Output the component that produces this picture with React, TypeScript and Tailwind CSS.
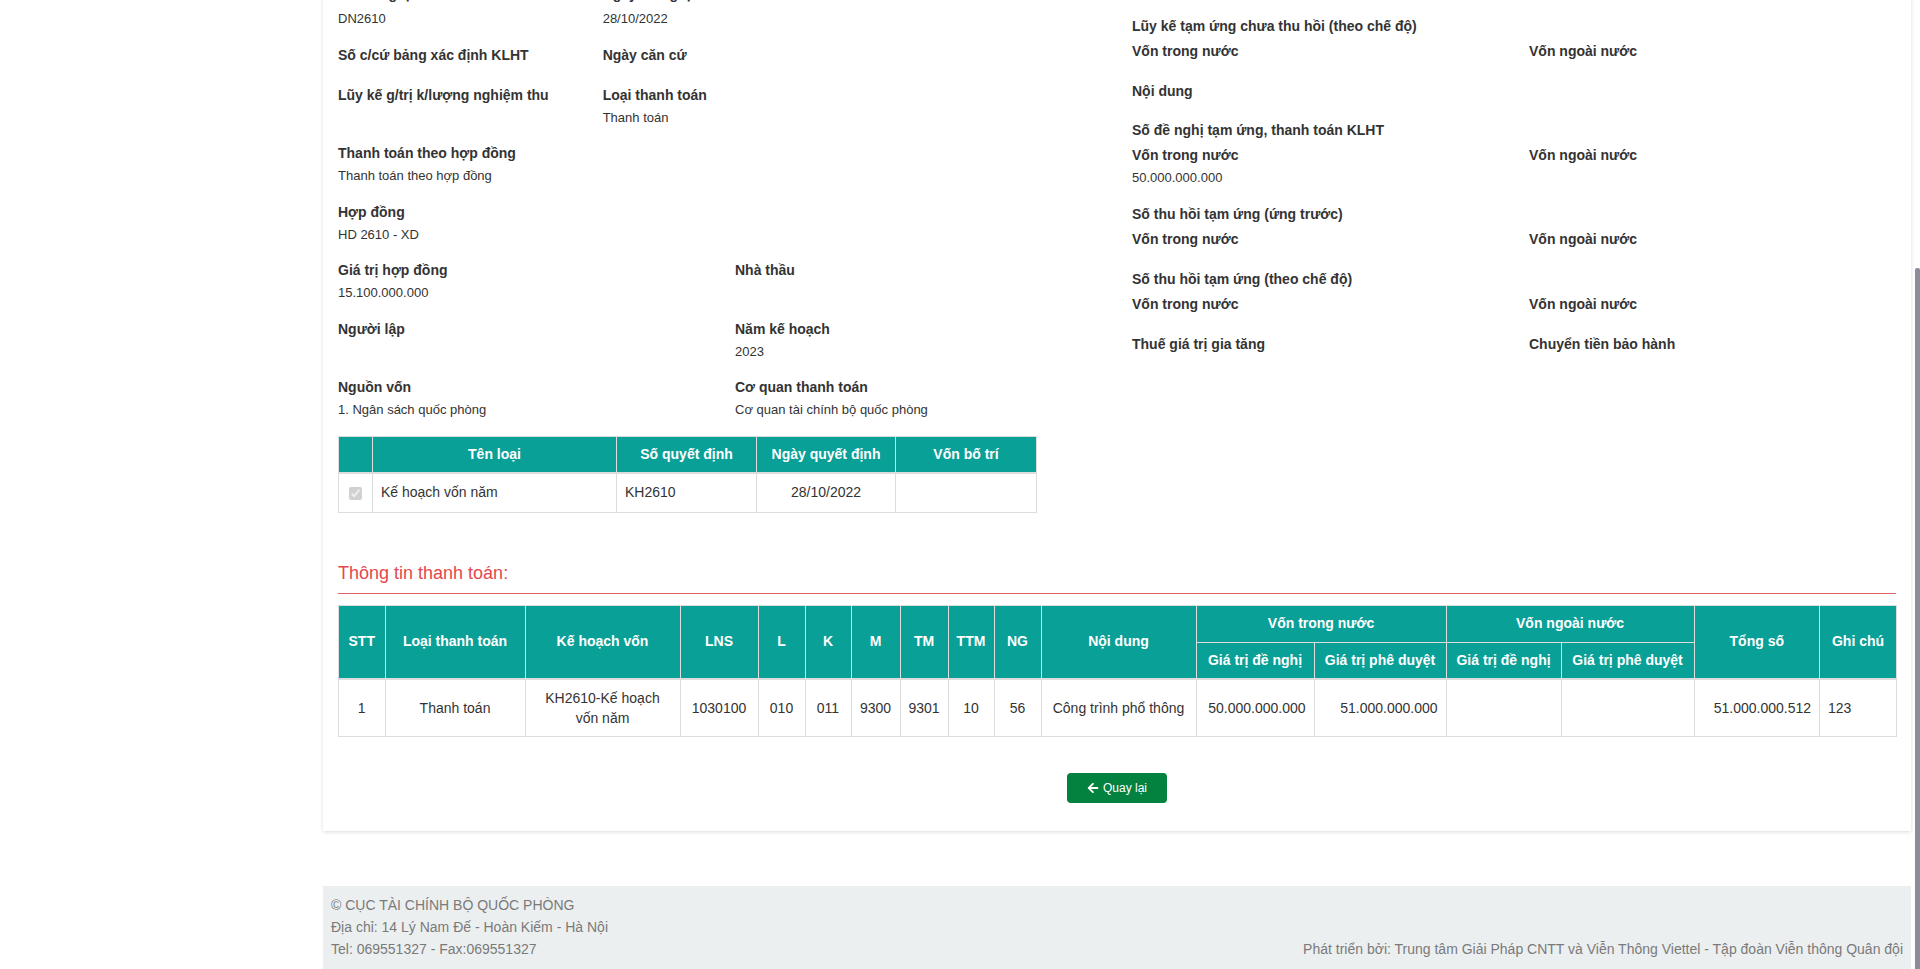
import { FaArrowLeft } from 'react-icons/fa';

type FieldProps = { label: string; value?: string; first?: boolean; className?: string };

function Field({ label, value, first, className }: FieldProps) {
  return (
    <div className={className ?? 'mb-[16px]'}>
      <div className={'text-[14px] leading-[20px] font-bold ' + (first ? 'mb-[6px]' : 'mb-[4px]')}>{label}</div>
      {value && <div className="text-[13px] leading-[18.5px]">{value}</div>}
    </div>
  );
}

function GroupTitle({ children }: { children: string }) {
  return <div className="text-[14px] leading-[20px] font-bold mb-[5px]">{children}</div>;
}

export default function App() {
  const th = 'border border-[#dddddd] font-bold text-white text-center align-middle px-[4px]';
  const td = 'border border-[#dddddd] align-middle px-[8px]';

  return (
    <div className="h-[969px] overflow-hidden flex bg-white text-[#333333] font-['Liberation_Sans',Arial,sans-serif]">
      <div className="w-[323px] shrink-0" />

      <div className="w-[1588px] shrink-0 flex flex-col">
        {/* main card */}
        <div className="-mt-[42px] bg-white shadow-[0_1px_4px_rgba(0,0,0,0.14)] px-[15px] pt-[26px] pb-[28px]">
          <div className="grid grid-cols-2 gap-x-[30px]">
            {/* left column */}
            <div>
              <div className="grid grid-cols-3 gap-x-[30px]">
                <Field first label="Số đề nghị" value="DN2610" />
                <Field first label="Ngày đề nghị" value="28/10/2022" />
                <div />
              </div>
              <div className="grid grid-cols-3 gap-x-[30px]">
                <Field label="Số c/cứ bảng xác định KLHT" />
                <Field label="Ngày căn cứ" />
                <div />
              </div>
              <div className="grid grid-cols-3 gap-x-[30px]">
                <Field label="Lũy kế g/trị k/lượng nghiệm thu" />
                <Field label="Loại thanh toán" value="Thanh toán" />
                <div />
              </div>
              <Field label="Thanh toán theo hợp đồng" value="Thanh toán theo hợp đồng" />
              <Field label="Hợp đồng" value="HD 2610 - XD" />
              <div className="grid grid-cols-2 gap-x-[30px]">
                <Field label="Giá trị hợp đồng" value="15.100.000.000" />
                <Field label="Nhà thầu" />
              </div>
              <div className="grid grid-cols-2 gap-x-[30px]">
                <Field label="Người lập" />
                <Field label="Năm kế hoạch" value="2023" />
              </div>
              <div className="grid grid-cols-2 gap-x-[30px]">
                <Field label="Nguồn vốn" value="1. Ngân sách quốc phòng" />
                <Field label="Cơ quan thanh toán" value="Cơ quan tài chính bộ quốc phòng" />
              </div>

              <table className="w-[698px] table-fixed border-collapse text-[14px]">
                <colgroup>
                  <col className="w-[34px]" />
                  <col className="w-[244px]" />
                  <col className="w-[140px]" />
                  <col className="w-[139px]" />
                  <col className="w-[141px]" />
                </colgroup>
                <thead className="bg-[#09a098]">
                  <tr className="h-[37px]">
                    <th className={th}></th>
                    <th className={th}>Tên loại</th>
                    <th className={th}>Số quyết định</th>
                    <th className={th}>Ngày quyết định</th>
                    <th className={th}>Vốn bố trí</th>
                  </tr>
                </thead>
                <tbody>
                  <tr className="h-[39px] border-t-2 border-[#dddddd]">
                    <td className={td + ' text-center px-0'}>
                      <input type="checkbox" checked disabled readOnly className="align-middle" />
                    </td>
                    <td className={td}>Kế hoạch vốn năm</td>
                    <td className={td}>KH2610</td>
                    <td className={td + ' text-center'}>28/10/2022</td>
                    <td className={td}></td>
                  </tr>
                </tbody>
              </table>
            </div>

            {/* right column */}
            <div className="pt-[32px]">
              <GroupTitle>Lũy kế tạm ứng chưa thu hồi (theo chế độ)</GroupTitle>
              <div className="grid grid-cols-2 gap-x-[30px]">
                <Field label="Vốn trong nước" />
                <Field label="Vốn ngoài nước" />
              </div>
              <Field label="Nội dung" className="mb-[19px]" />
              <GroupTitle>Số đề nghị tạm ứng, thanh toán KLHT</GroupTitle>
              <div className="grid grid-cols-2 gap-x-[30px]">
                <Field label="Vốn trong nước" value="50.000.000.000" />
                <Field label="Vốn ngoài nước" />
              </div>
              <GroupTitle>Số thu hồi tạm ứng (ứng trước)</GroupTitle>
              <div className="grid grid-cols-2 gap-x-[30px]">
                <Field label="Vốn trong nước" />
                <Field label="Vốn ngoài nước" />
              </div>
              <GroupTitle>Số thu hồi tạm ứng (theo chế độ)</GroupTitle>
              <div className="grid grid-cols-2 gap-x-[30px]">
                <Field label="Vốn trong nước" />
                <Field label="Vốn ngoài nước" />
              </div>
              <div className="grid grid-cols-2 gap-x-[30px]">
                <Field label="Thuế giá trị gia tăng" />
                <Field label="Chuyển tiền bảo hành" />
              </div>
            </div>
          </div>

          {/* payment info */}
          <div className="mt-[50px] pb-[10px] border-b border-[#e06464] text-[18px] leading-[20px] text-[#e5474d]">
            Thông tin thanh toán:
          </div>

          <table className="mt-[11px] w-full table-fixed border-collapse text-[14px]">
            <colgroup>
              <col className="w-[46.5px]" />
              <col className="w-[140px]" />
              <col className="w-[155px]" />
              <col className="w-[78px]" />
              <col className="w-[47px]" />
              <col className="w-[46px]" />
              <col className="w-[49px]" />
              <col className="w-[48px]" />
              <col className="w-[46px]" />
              <col className="w-[47px]" />
              <col className="w-[155px]" />
              <col className="w-[118px]" />
              <col className="w-[132px]" />
              <col className="w-[115px]" />
              <col className="w-[133px]" />
              <col className="w-[125.5px]" />
              <col className="w-[77px]" />
            </colgroup>
            <thead className="bg-[#09a098]">
              <tr className="h-[37px]">
                <th rowSpan={2} className={th}>STT</th>
                <th rowSpan={2} className={th}>Loại thanh toán</th>
                <th rowSpan={2} className={th}>Kế hoạch vốn</th>
                <th rowSpan={2} className={th}>LNS</th>
                <th rowSpan={2} className={th}>L</th>
                <th rowSpan={2} className={th}>K</th>
                <th rowSpan={2} className={th}>M</th>
                <th rowSpan={2} className={th}>TM</th>
                <th rowSpan={2} className={th}>TTM</th>
                <th rowSpan={2} className={th}>NG</th>
                <th rowSpan={2} className={th}>Nội dung</th>
                <th colSpan={2} className={th}>Vốn trong nước</th>
                <th colSpan={2} className={th}>Vốn ngoài nước</th>
                <th rowSpan={2} className={th}>Tổng số</th>
                <th rowSpan={2} className={th}>Ghi chú</th>
              </tr>
              <tr className="h-[37px]">
                <th className={th}>Giá trị đề nghị</th>
                <th className={th}>Giá trị phê duyệt</th>
                <th className={th}>Giá trị đề nghị</th>
                <th className={th}>Giá trị phê duyệt</th>
              </tr>
            </thead>
            <tbody>
              <tr className="h-[57px] border-t-2 border-[#dddddd] leading-[20px]">
                <td className={td + ' text-center'}>1</td>
                <td className={td + ' text-center'}>Thanh toán</td>
                <td className={td + ' text-center'}>KH2610-Kế hoạch vốn năm</td>
                <td className={td + ' text-center'}>1030100</td>
                <td className={td + ' text-center'}>010</td>
                <td className={td + ' text-center'}>011</td>
                <td className={td + ' text-center'}>9300</td>
                <td className={td + ' text-center'}>9301</td>
                <td className={td + ' text-center'}>10</td>
                <td className={td + ' text-center'}>56</td>
                <td className={td + ' text-center'}>Công trình phổ thông</td>
                <td className={td + ' text-right'}>50.000.000.000</td>
                <td className={td + ' text-right'}>51.000.000.000</td>
                <td className={td}></td>
                <td className={td}></td>
                <td className={td + ' text-right'}>51.000.000.512</td>
                <td className={td}>123</td>
              </tr>
            </tbody>
          </table>

          <div className="mt-[36px] flex justify-center">
            <button className="w-[100px] h-[30px] rounded-[4px] bg-[#03813f] text-white text-[12px] flex items-center justify-center gap-[4px]">
              <FaArrowLeft className="w-[12px] h-[12px]" />
              <span>Quay lại</span>
            </button>
          </div>
        </div>

        {/* footer */}
        <footer className="mt-[55px] flex-1 bg-[#eceff0] px-[8px] pt-[8px] text-[14px] leading-[22px] text-[#7a7a7a] flex justify-between items-start">
          <div>
            <div>© CỤC TÀI CHÍNH BỘ QUỐC PHÒNG</div>
            <div>Địa chỉ: 14 Lý Nam Đế - Hoàn Kiếm - Hà Nội</div>
            <div>Tel: 069551327 - Fax:069551327</div>
          </div>
          <div className="mt-[44px]">
            Phát triển bởi: Trung tâm Giải Pháp CNTT và Viễn Thông Viettel - Tập đoàn Viễn thông Quân đội
          </div>
        </footer>
      </div>

      {/* scrollbar */}
      <div className="w-[9px] shrink-0 flex flex-col items-end">
        <div className="mt-[268px] w-[5px] flex-1 rounded-t-[2px] bg-[#8d8c98]" />
      </div>
    </div>
  );
}
